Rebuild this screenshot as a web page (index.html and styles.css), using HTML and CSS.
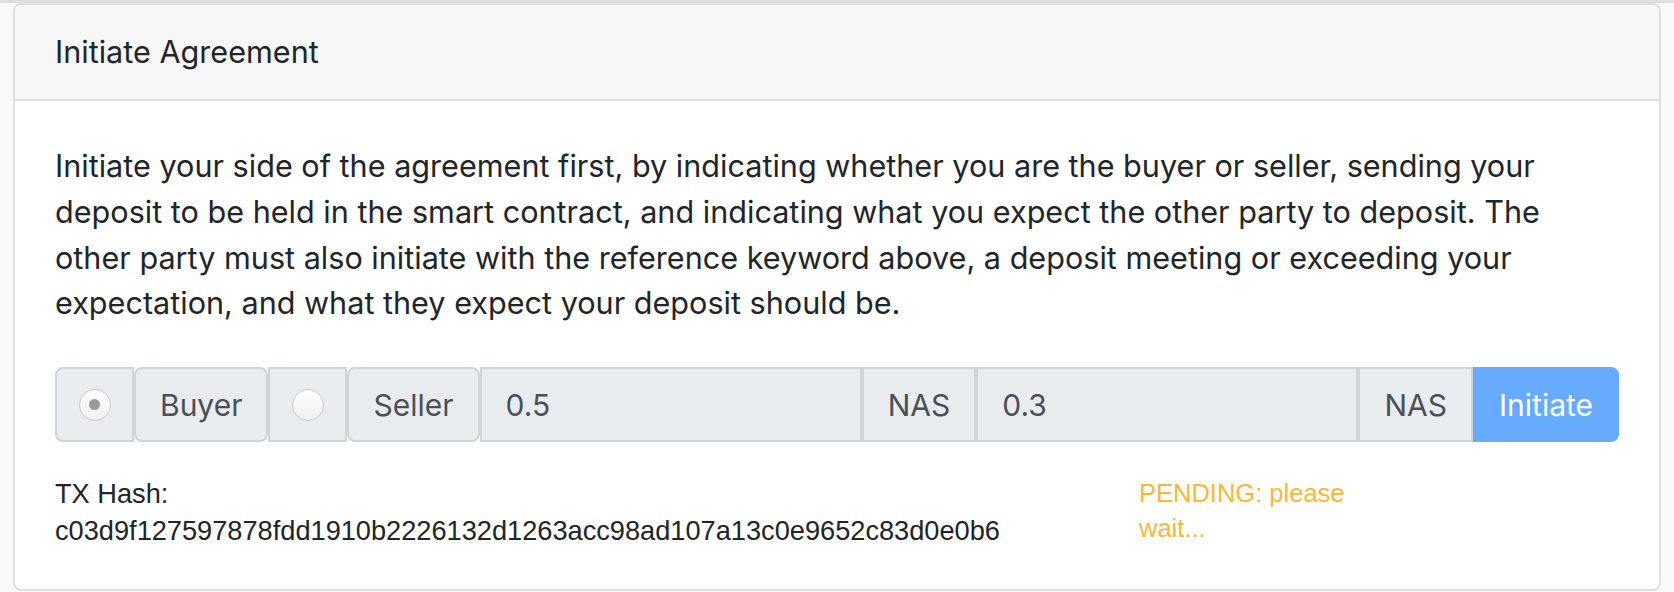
FILE: index.html
```html
<!DOCTYPE html>
<html lang="en">
<head>
<meta charset="utf-8">
<title>Initiate Agreement</title>
<link rel="stylesheet" href="styles.css">
</head>
<body>
<div class="topline"></div>
<div class="card">
  <div class="card-header">Initiate Agreement</div>
  <div class="card-body">
    <p class="intro">Initiate your side of the agreement first, by indicating whether you are the buyer or seller, sending your<br> deposit to be held in the smart contract, and indicating what you expect the other party to deposit. The<br> other party must also initiate with the reference keyword above, a deposit meeting or exceeding your<br> expectation, and what they expect your deposit should be.</p>
    <div class="input-group">
      <div class="addon radio-box first"><input type="radio" name="role" class="radio" checked disabled></div>
      <div class="addon label-box">Buyer</div>
      <div class="addon radio-box"><input type="radio" name="role" class="radio" disabled></div>
      <div class="addon label-box">Seller</div>
      <input class="field" type="text" value="0.5" readonly>
      <div class="addon">NAS</div>
      <input class="field" type="text" value="0.3" readonly>
      <div class="addon">NAS</div>
      <button class="btn" type="button" disabled>Initiate</button>
    </div>
    <div class="tx-row">
      <div class="tx-col">TX Hash:<br>c03d9f127597878fdd1910b2226132d1263acc98ad107a13c0e9652c83d0e0b6</div>
      <div class="status-col">PENDING: please wait...</div>
    </div>
  </div>
</div>
</body>
</html>
```

FILE: styles.css
```css
* { box-sizing: border-box; }

html, body {
  margin: 0;
  padding: 0;
  background: #f8f9fa;
  font-family: Inter, "Noto Sans", sans-serif;
  color: #212529;
}

.topline {
  height: 3px;
  background: #dedede;
}

.card {
  margin: 0 13px;
  background: #fff;
  border: 2px solid #dfdfdf;
  border-radius: 8px;
  overflow: hidden;
}

.card-header {
  background: #f7f7f7;
  border-bottom: 2px solid #dfdfdf;
  padding: 24px 40px;
  font-size: 30.6px;
  line-height: 46px;
}

.card-body {
  padding: 42px 40px 40px;
}

.intro {
  margin: 0 0 41px;
  font-size: 30.6px;
  line-height: 45.8px;
  white-space: normal;
}

.input-group {
  display: flex;
  height: 75px;
}

.addon {
  display: flex;
  align-items: center;
  justify-content: center;
  padding: 0 24px;
  background: #e9ecef;
  border: 2px solid #ced4da;
  color: #495057;
  font-size: 30px;
  white-space: nowrap;
}

.radio-box {
  width: 79px;
  padding: 0;
}

.radio-box.first {
  border-radius: 8px 0 0 8px;
}

.label-box {
  border-radius: 8px;
}

.radio {
  appearance: none;
  -webkit-appearance: none;
  margin: 0;
  width: 32px;
  height: 32px;
  border-radius: 50%;
  border: 1px solid #c8c8c8;
  background: linear-gradient(#fdfdfd, #f1f1f1);
  display: flex;
  align-items: center;
  justify-content: center;
}

.radio:checked::after {
  content: "";
  width: 11px;
  height: 11px;
  border-radius: 50%;
  background: #9a9a9a;
}

.field {
  flex: 1 1 0;
  min-width: 0;
  margin: 0;
  padding: 0 24px;
  background: #e9ecef;
  border: 2px solid #ced4da;
  color: #495057;
  font-family: inherit;
  font-size: 30px;
  outline: none;
}

.btn {
  margin: 0;
  padding: 0 24px;
  background: #66abff;
  border: 2px solid #66abff;
  border-radius: 0 8px 8px 0;
  color: #fff;
  font-family: inherit;
  font-size: 30px;
}

.tx-row {
  display: grid;
  grid-template-columns: 1024px 211px;
  column-gap: 60px;
  margin-top: 33px;
}

.tx-col {
  font-family: "Liberation Sans", Arial, sans-serif;
  font-size: 27.2px;
  line-height: 37px;
  color: #212529;
}

.status-col {
  font-family: "Liberation Sans", Arial, sans-serif;
  font-size: 25.5px;
  line-height: 35px;
  color: #fdb737;
  padding-top: 1px;
}
```
